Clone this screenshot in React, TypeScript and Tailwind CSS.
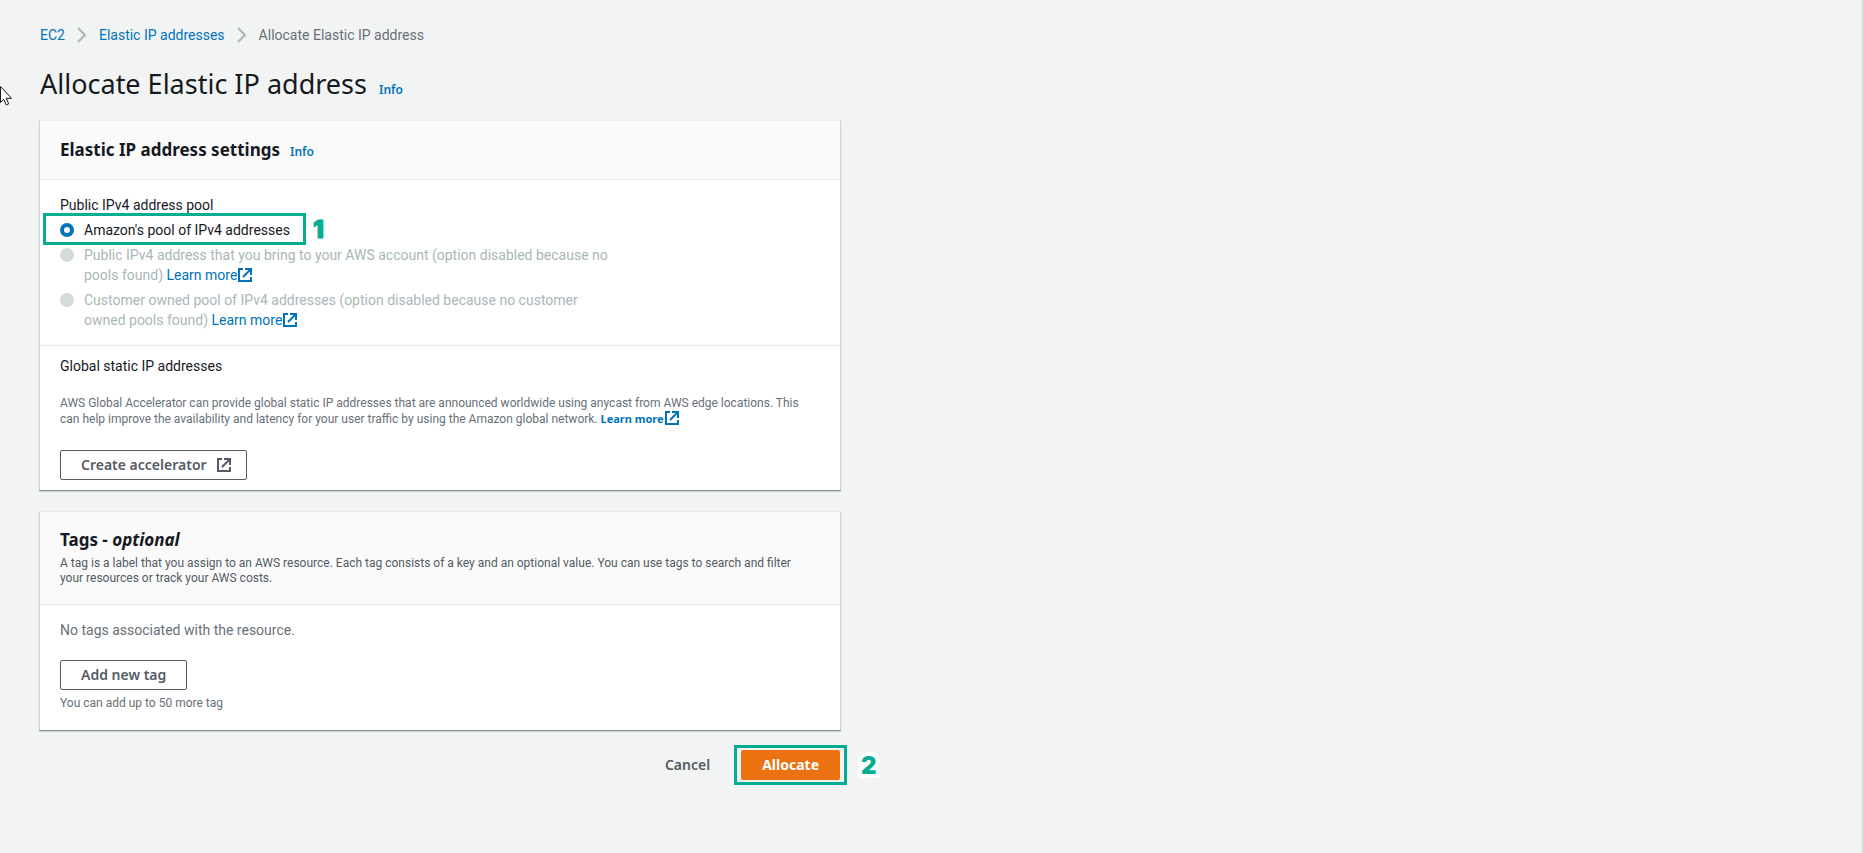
import { useState, type ReactNode } from 'react';

const POOLS = [
  {
    id: 'amazon',
    label: "Amazon's pool of IPv4 addresses",
    disabled: false,
  },
  {
    id: 'byoip',
    label:
      'Public IPv4 address that you bring to your AWS account (option disabled because no pools found)',
    disabled: true,
  },
  {
    id: 'customer',
    label:
      'Customer owned pool of IPv4 addresses (option disabled because no customer owned pools found)',
    disabled: true,
  },
];

function ExternalIcon({ className = '' }: { className?: string }) {
  return (
    <svg
      viewBox="0 0 14 14"
      fill="none"
      stroke="currentColor"
      strokeWidth="2"
      aria-hidden="true"
      className={`inline-block size-[14px] shrink-0 ${className}`}
    >
      <path d="M5 1H1v12h12V9" />
      <path d="M7 1h6v6" />
      <path d="M13 1 5 9" />
    </svg>
  );
}

function ChevronIcon() {
  return (
    <svg
      viewBox="0 0 10 16"
      fill="none"
      stroke="#aab7b8"
      strokeWidth="2"
      aria-hidden="true"
      className="h-4 w-[10px] shrink-0"
    >
      <path d="M1 1l7 7-7 7" />
    </svg>
  );
}

function CursorIcon() {
  return (
    <svg
      viewBox="0 0 13 20"
      fill="#fff"
      stroke="#16191f"
      strokeWidth="1"
      aria-hidden="true"
      className="absolute left-0 top-[86px] h-5 w-[13px]"
    >
      <path d="M0.5 0.5v16l3.2-3.2 2.6 5.6 2.4-1.1-2.5-5.5h5.3z" />
    </svg>
  );
}

function InfoLink() {
  return (
    <a href="#info" className="font-['Noto_Sans',sans-serif] text-xs font-semibold text-[#0073bb]">
      Info
    </a>
  );
}

function LearnMore({ bold = false }: { bold?: boolean }) {
  return (
    <a
      href="#learn-more"
      className={
        bold
          ? "font-['Noto_Sans',sans-serif] text-[11px] font-bold text-[#0073bb]"
          : 'text-[#0073bb]'
      }
    >
      Learn more
      <ExternalIcon className="ml-px align-[-2px]" />
    </a>
  );
}

function Card({ header, children }: { header: ReactNode; children: ReactNode }) {
  return (
    <section className="border border-t-[#eaeded] border-x-[#cdd3d3] border-b-[#879596] bg-white shadow-[0_1px_1px_0_rgba(0,28,36,0.15)]">
      <div className="border-b border-[#eaeded] bg-[#fafafa] px-5">{header}</div>
      {children}
    </section>
  );
}

function NormalButton({ icon, children }: { icon?: ReactNode; children: ReactNode }) {
  return (
    <button
      type="button"
      className={`flex h-[30px] items-center gap-[10px] rounded-xs border border-[#545b64] bg-white pl-5 font-['Noto_Sans',sans-serif] text-sm font-semibold text-[#545b64] ${icon ? 'pr-[15px]' : 'pr-5'}`}
    >
      {children}
      {icon}
    </button>
  );
}

export default function App() {
  const [pool, setPool] = useState('amazon');

  return (
    <div className="relative min-h-screen border-r-2 border-[#d5dbdb] bg-[#f2f3f3] font-[Roboto,sans-serif] text-sm text-[#16191f]">
      <CursorIcon />

      <main className="px-10 pb-16 pt-[25px]">
        <nav aria-label="Breadcrumb" className="flex items-center gap-3 leading-5">
          <a href="#ec2" className="text-[#0073bb]">
            EC2
          </a>
          <ChevronIcon />
          <a href="#addresses" className="text-[#0073bb]">
            Elastic IP addresses
          </a>
          <ChevronIcon />
          <span className="text-[#687078]">Allocate Elastic IP address</span>
        </nav>

        <div className="mt-[21px] flex items-baseline gap-3 leading-9">
          <h1 className="font-['Noto_Sans',sans-serif] text-[27px]">Allocate Elastic IP address</h1>
          <InfoLink />
        </div>

        <form className="-ml-px mt-[18px] max-w-[802px]" onSubmit={(e) => e.preventDefault()}>
          <Card
            header={
              <div className="flex h-[58px] items-center">
                <div className="flex items-baseline gap-[10px]">
                  <h2 className="font-['Noto_Sans',sans-serif] text-[17px] font-bold">
                    Elastic IP address settings
                  </h2>
                  <InfoLink />
                </div>
              </div>
            }
          >
            <fieldset className="px-5 pb-[15px] pt-[15px]">
              <legend className="float-left w-full leading-5">Public IPv4 address pool</legend>
              <div className="clear-both flex max-w-[555px] flex-col gap-[5px] pt-[5px]">
                {POOLS.map(({ id, label, disabled }) => (
                  <div key={id} className="relative flex gap-[10px] leading-5">
                    <input
                      id={id}
                      type="radio"
                      name="pool"
                      disabled={disabled}
                      checked={pool === id}
                      onChange={() => setPool(id)}
                      className="mt-[3px] size-[14px] shrink-0 appearance-none rounded-full bg-white checked:border-4 checked:border-[#0073bb] disabled:bg-[#d5dbdb]"
                    />
                    <div className={disabled ? 'text-[#aab7b8]' : ''}>
                      <label htmlFor={id}>{label}</label>
                      {disabled && (
                        <>
                          {' '}
                          <LearnMore />
                        </>
                      )}
                    </div>
                    {id === 'amazon' && (
                      <>
                        <div className="pointer-events-none absolute -left-[17px] -top-[7px] h-8 w-[263px] border-3 border-[#07ad91]" />
                        <span className="absolute left-[253px] top-0 font-[Inter,sans-serif] text-2xl font-black leading-5 text-[#07ad91] [-webkit-text-stroke:1px_#07ad91]">
                          1
                        </span>
                      </>
                    )}
                  </div>
                ))}
              </div>
            </fieldset>

            <div className="border-t border-[#eaeded] px-5 pb-[10px] pt-[10px]">
              <h3 className="leading-5">Global static IP addresses</h3>
              <p className="mt-[19px] text-xs leading-4 text-[#687078]">
                AWS Global Accelerator can provide global static IP addresses that are announced
                worldwide using anycast from AWS edge locations. This can help improve the
                availability and latency for your user traffic by using the Amazon global network.{' '}
                <LearnMore bold />
              </p>
              <div className="mt-[23px] flex">
                <NormalButton icon={<ExternalIcon />}>Create accelerator</NormalButton>
              </div>
            </div>
          </Card>

          <div className="mt-5">
            <Card
              header={
                <div className="pb-[18px] pt-4">
                  <h2 className="font-['Noto_Sans',sans-serif] text-[17px] font-bold leading-6">
                    Tags - <i>optional</i>
                  </h2>
                  <p className="mt-1 pr-3 text-xs leading-[15px] text-[#545b64]">
                    A tag is a label that you assign to an AWS resource. Each tag consists of a key
                    and an optional value. You can use tags to search and filter your resources or
                    track your AWS costs.
                  </p>
                </div>
              }
            >
              <div className="px-5 pb-[19px] pt-[15px] text-[#687078]">
                <p className="leading-5">No tags associated with the resource.</p>
                <div className="mt-5 flex">
                  <NormalButton>Add new tag</NormalButton>
                </div>
                <p className="mt-[5px] text-xs leading-4">You can add up to 50 more tag</p>
              </div>
            </Card>
          </div>

          <div className="mt-[19px] flex justify-end gap-[10px] pr-px">
            <button
              type="button"
              className="h-[30px] px-[21px] font-['Noto_Sans',sans-serif] text-sm font-semibold text-[#545b64]"
            >
              Cancel
            </button>
            <div className="relative">
              <button
                type="submit"
                className="h-[30px] rounded-xs bg-[#ec7211] px-[21px] font-['Noto_Sans',sans-serif] text-sm font-bold text-white"
              >
                Allocate
              </button>
              <div className="pointer-events-none absolute -inset-x-[7px] -inset-y-[5px] border-3 border-[#07ad91]" />
              <span className="absolute left-full top-1 ml-[21px] font-[Inter,sans-serif] text-2xl font-black leading-6 text-[#07ad91] [-webkit-text-stroke:8px_white] [paint-order:stroke_fill] [stroke-linejoin:round]">
                2
              </span>
            </div>
          </div>
        </form>
      </main>
    </div>
  );
}
